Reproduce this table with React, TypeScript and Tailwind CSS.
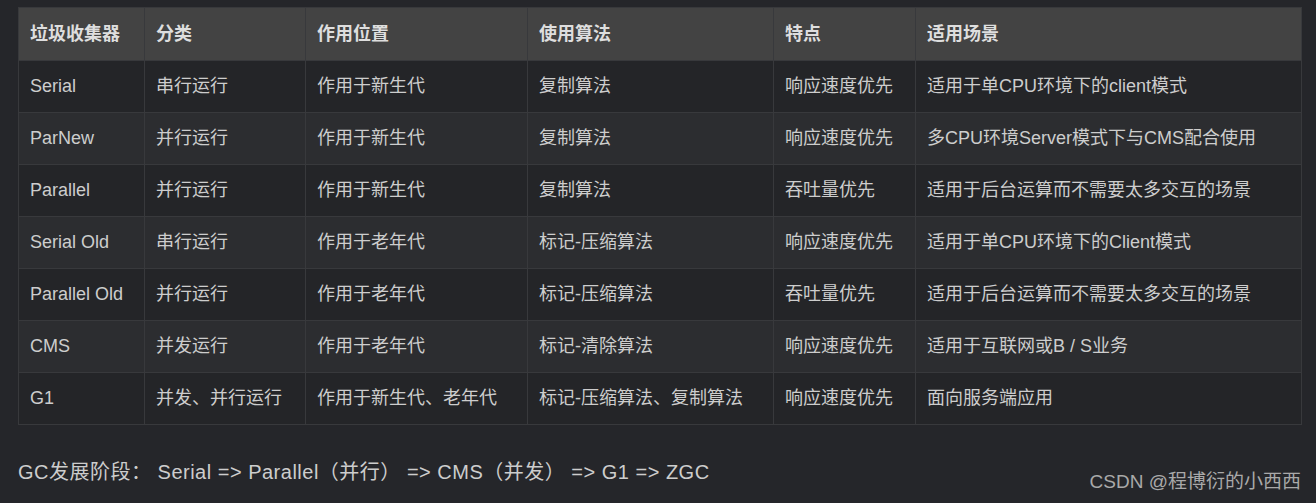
const rows = [
  ["Serial", "串行运行", "作用于新生代", "复制算法", "响应速度优先", "适用于单CPU环境下的client模式"],
  ["ParNew", "并行运行", "作用于新生代", "复制算法", "响应速度优先", "多CPU环境Server模式下与CMS配合使用"],
  ["Parallel", "并行运行", "作用于新生代", "复制算法", "吞吐量优先", "适用于后台运算而不需要太多交互的场景"],
  ["Serial Old", "串行运行", "作用于老年代", "标记-压缩算法", "响应速度优先", "适用于单CPU环境下的Client模式"],
  ["Parallel Old", "并行运行", "作用于老年代", "标记-压缩算法", "吞吐量优先", "适用于后台运算而不需要太多交互的场景"],
  ["CMS", "并发运行", "作用于老年代", "标记-清除算法", "响应速度优先", "适用于互联网或B / S业务"],
  ["G1", "并发、并行运行", "作用于新生代、老年代", "标记-压缩算法、复制算法", "响应速度优先", "面向服务端应用"],
];

const headers = ["垃圾收集器", "分类", "作用位置", "使用算法", "特点", "适用场景"];
const widths = ["w-[126px]", "w-[161px]", "w-[222px]", "w-[246px]", "w-[142px]", "w-[386px]"];

export default function App() {
  return (
    <main className="h-[503px] w-[1316px] overflow-hidden bg-[#25262a] pl-[18px] pr-[15px] pt-[7px] font-['Liberation_Sans','Noto_Sans_CJK_SC',sans-serif] text-[18px] text-[#cdcdcd]">
      <table className="w-[1283px] table-fixed border-collapse border border-[#3a3b3e]">
        <thead>
          <tr className="h-[53px] bg-[#434343]">
            {headers.map((h, i) => (
              <th
                key={h}
                className={`${widths[i]} border border-[#38393c] px-[11px] text-left font-bold text-[#dedede]`}
              >
                {h}
              </th>
            ))}
          </tr>
        </thead>
        <tbody>
          {rows.map((row, r) => (
            <tr key={row[0]} className={`h-[52px] ${r % 2 === 0 ? "bg-[#242528]" : "bg-[#2c2d30]"}`}>
              {row.map((cell, i) => (
                <td key={i} className="whitespace-nowrap border border-[#38393c] px-[11px] font-normal">
                  {cell}
                </td>
              ))}
            </tr>
          ))}
        </tbody>
      </table>

      <div className="mt-[34px] flex items-start justify-between">
        <p className="whitespace-nowrap text-[20px] leading-[26px] tracking-[0.5px]">
          GC发展阶段： Serial =&gt; Parallel（并行） =&gt; CMS（并发） =&gt; G1 =&gt; ZGC
        </p>
        <span className="mt-[11px] text-[19px] leading-[24px] text-[#a9a9a9]">CSDN @程博衍的小西西</span>
      </div>
    </main>
  );
}
